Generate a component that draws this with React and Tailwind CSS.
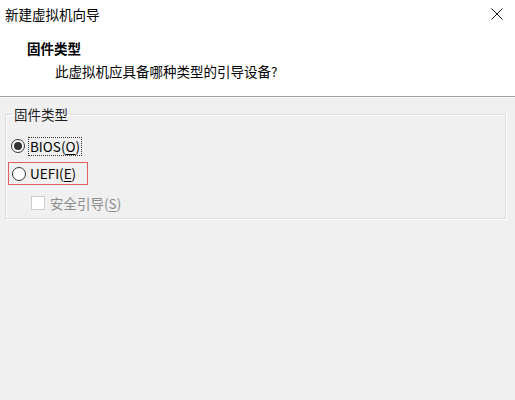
import React, { useState } from 'react';

const font = { fontFamily: '"Noto Sans CJK SC", "Noto Sans", sans-serif' };

const Radio = ({ checked }) => (
  <span className="flex h-[14px] w-[14px] shrink-0 items-center justify-center rounded-full border border-[#333333] bg-white">
    {checked && <span className="h-[8px] w-[8px] rounded-full bg-[#333333]" />}
  </span>
);

const App = () => {
  const [firmware, setFirmware] = useState('BIOS');

  return (
    <div className="flex h-[400px] w-[515px] flex-col overflow-hidden bg-[#f0f0f0] text-[13.5px] text-black" style={font}>
      {/* 头部 */}
      <div className="h-[97px] shrink-0 border-b border-[#a0a0a0] bg-white">
        <div className="flex items-center justify-between pl-[5px] pr-[12px] pt-[4px] leading-[20px]">
          <span>新建虚拟机向导</span>
          <svg className="h-[12px] w-[12px]" viewBox="0 0 12 12" fill="none" stroke="#1a1a1a" strokeWidth="1">
            <path d="M0.5 0.5l11 11M11.5 0.5l-11 11" />
          </svg>
        </div>
        <div className="mt-[14px] pl-[27px] font-bold leading-[20px]">固件类型</div>
        <div className="mt-[3px] pl-[55px] leading-[20px]">此虚拟机应具备哪种类型的引导设备?</div>
      </div>
      <div className="h-px shrink-0 bg-white" />

      {/* 固件类型 */}
      <fieldset className="ml-[5px] mr-[9px] mt-[6px] h-[115px] border border-[#dcdcdc] shadow-[inset_1px_1px_0_#ffffff,1px_1px_0_#ffffff]">
        <legend className="ml-[6px] px-[2px] leading-[20px] text-[#1e1e1e]">固件类型</legend>
        <div className="flex flex-col pl-[2px] pt-[11px]">
          <button
            onClick={() => setFirmware('BIOS')}
            className="flex h-[22px] w-fit items-center gap-[3px] px-[3px]"
          >
            <Radio checked={firmware === 'BIOS'} />
            <span className="border border-dotted border-[#333333] px-px leading-[17px]">
              BIOS(<span className="underline underline-offset-2">O</span>)
            </span>
          </button>
          <button
            onClick={() => setFirmware('UEFI')}
            className="mt-[5px] flex h-[23px] w-[80px] items-center gap-[3px] border border-[#e06060] px-[3px]"
          >
            <Radio checked={firmware === 'UEFI'} />
            <span className="px-px leading-[17px]">
              UEFI(<span className="underline underline-offset-2">E</span>)
            </span>
          </button>
          <div className="mt-[7px] flex h-[22px] items-center gap-[5px] pl-[23px] text-[#8c8c8c]">
            <span className="h-[14px] w-[14px] border border-[#cccccc] bg-white" />
            <span>
              安全引导(<span className="underline underline-offset-2">S</span>)
            </span>
          </div>
        </div>
      </fieldset>
    </div>
  );
};

export default App;
